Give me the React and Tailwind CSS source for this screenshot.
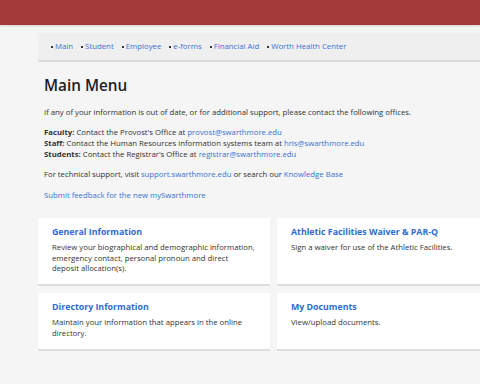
export default function App() {
  const nav = ['Main', 'Student', 'Employee', 'e-forms', 'Financial Aid', 'Worth Health Center'];

  const cards = [
    {
      title: 'General Information',
      text: 'Review your biographical and demographic information, emergency contact, personal pronoun and direct deposit allocation(s).',
    },
    {
      title: 'Athletic Facilities Waiver & PAR-Q',
      text: 'Sign a waiver for use of the Athletic Facilities.',
    },
    {
      title: 'Directory Information',
      text: 'Maintain your information that appears in the online directory.',
    },
    {
      title: 'My Documents',
      text: 'View/upload documents.',
    },
  ];

  return (
    <div className="w-[480px] h-[384px] overflow-hidden bg-[#f5f5f5] font-['Open_Sans',sans-serif] text-[#333] text-[7.75px] leading-[11px]">
      {/* Top bar */}
      <div className="h-[25px] bg-[#a33b3b] shadow-[0_1px_2px_rgba(0,0,0,0.15)]" />

      <div className="ml-[38px] w-[471px] pt-[8px]">
        {/* Nav */}
        <nav className="h-[29px] bg-[#efefef] border-b-2 border-[#dcdcdc] flex items-center pl-[13px] gap-[8px] text-[7.8px]">
          {nav.map((item) => (
            <span key={item} className="flex items-center">
              <span className="w-[2px] h-[2px] bg-[#333] mr-[2px]" />
              <a className="text-[#3a72d0]">{item}</a>
            </span>
          ))}
        </nav>

        {/* Main content */}
        <div className="pl-[6px] pr-[20px]">
          <h1 className="mt-[13px] text-[15.3px] leading-[20px] font-semibold text-[#222]">Main Menu</h1>
          <p className="mt-[12px]">
            If any of your information is out of date, or for additional support, please contact the following offices.
          </p>
          <p className="mt-[9px]">
            <b>Faculty:</b> Contact the Provost's Office at <a className="text-[#3a72d0]">provost@swarthmore.edu</a>
            <br />
            <b>Staff:</b> Contact the Human Resources information systems team at{' '}
            <a className="text-[#3a72d0]">hris@swarthmore.edu</a>
            <br />
            <b>Students:</b> Contact the Registrar's Office at{' '}
            <a className="text-[#3a72d0]">registrar@swarthmore.edu</a>
          </p>
          <p className="mt-[9px]">
            For technical support, visit <a className="text-[#3a72d0]">support.swarthmore.edu</a> or search our{' '}
            <a className="text-[#3a72d0]">Knowledge Base</a>
          </p>
          <p className="mt-[10px]">
            <a className="text-[#3a72d0]">Submit feedback for the new mySwarthmore</a>
          </p>
        </div>

        {/* Cards */}
        <div className="mt-[17px] grid grid-cols-2 gap-x-[7px] gap-y-[7px]">
          {cards.map((c) => (
            <div key={c.title} className="bg-white border-b-2 border-[#dedede] pt-[8px] pb-[10px] pl-[14px] pr-[14px]">
              <h2 className="text-[8.8px] leading-[13px] font-bold text-[#2f6bd0]">{c.title}</h2>
              <p className="mt-[3px] leading-[10.7px]">{c.text}</p>
            </div>
          ))}
        </div>
      </div>
    </div>
  );
}
